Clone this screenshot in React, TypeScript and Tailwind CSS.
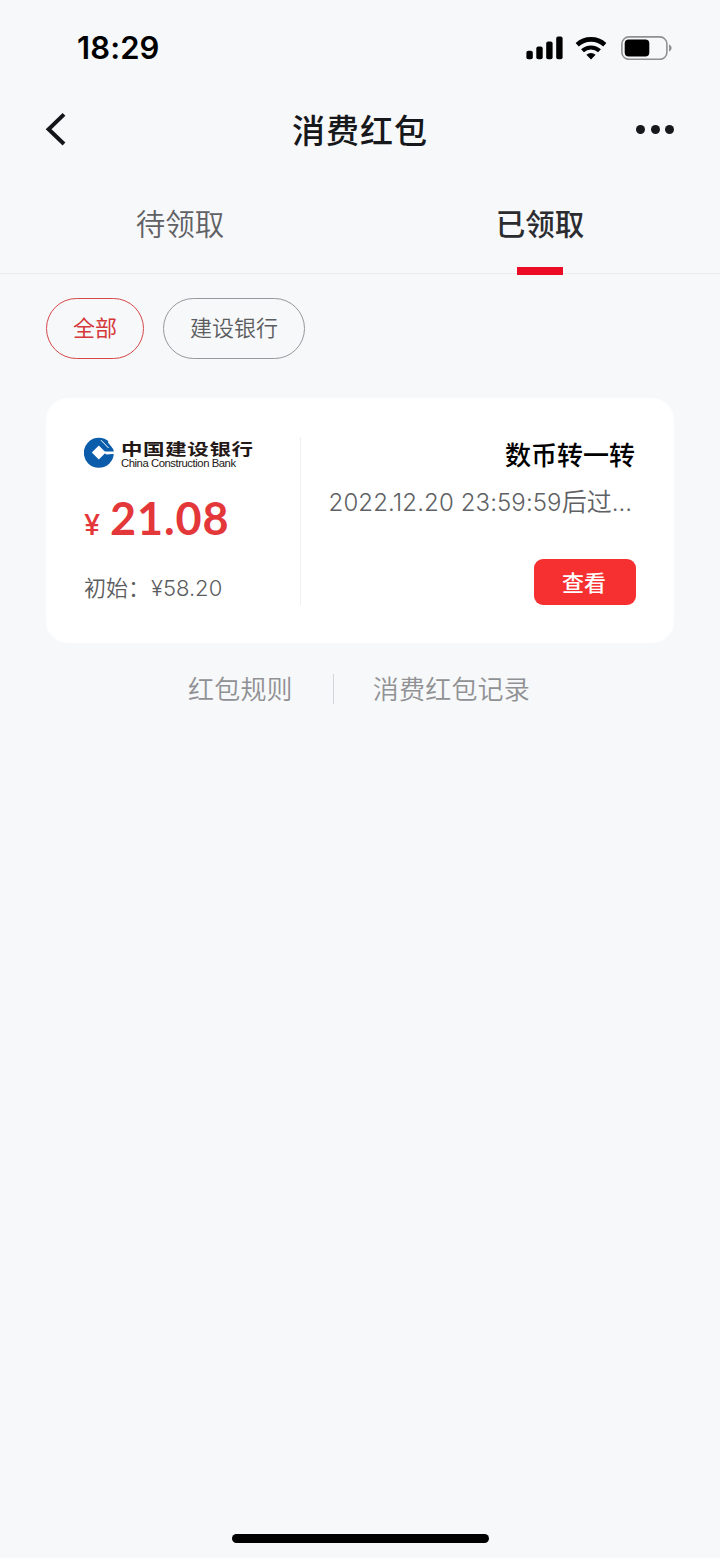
import { useState } from 'react';

const TABS = ['待领取', '已领取'];
const BANKS = ['全部', '建设银行'];

function StatusBar() {
  return (
    <div className="flex h-24 items-center justify-between pl-[77px] pr-[48px]">
      <span className="font-['Inter',sans-serif] text-[31px] leading-[40px] font-semibold tracking-[0.1px] text-black">18:29</span>
      <div className="flex items-center">
        <svg width="37" height="24" viewBox="0 0 37 24" fill="#000">
          <rect x="0.4" y="14.8" width="6.4" height="8.4" rx="2" />
          <rect x="10.3" y="10.4" width="6.4" height="12.8" rx="2" />
          <rect x="20.2" y="5.5" width="6.4" height="17.7" rx="2" />
          <rect x="30.2" y="0.5" width="6.4" height="22.7" rx="2" />
        </svg>
        <svg className="ml-3" width="32" height="24" viewBox="0 0 32 24" fill="none" stroke="#000" strokeWidth="4.6">
          <path d="M2.2 8.8a20.4 20.4 0 0 1 27.6 0" />
          <path d="M7.5 14.8a12.6 12.6 0 0 1 17 0" strokeWidth="4.2" />
          <path d="M16 23.4l-4.6-4.6a6.8 6.8 0 0 1 9.2 0z" fill="#000" stroke="none" />
        </svg>
        <svg className="ml-3.5" width="51" height="24" viewBox="0 0 51 24">
          <rect x="0.9" y="0.9" width="45" height="22.4" rx="7" fill="none" stroke="#8f9092" strokeWidth="1.6" />
          <rect x="3.7" y="3.6" width="24.6" height="17" rx="4" fill="#000" />
          <path d="M48 8.6c1.6.6 2.6 2 2.6 3.5s-1 2.9-2.6 3.5z" fill="#8f9092" />
        </svg>
      </div>
    </div>
  );
}

function BankLogo() {
  return (
    <div className="flex h-8 items-center">
      <svg width="31" height="32" viewBox="0 0 31 32">
        <circle cx="14.8" cy="15.8" r="15" fill="#0b5cab" />
        <path fill="#fff" d="M14.8 8.4l7 7-7 7-7-7z" />
        <path fill="#fff" d="M20.4 14.4H31v2.4l-8.6.8-2.6-2.2z" />
        <path d="M17 3.2l7.6 7.8" stroke="#fff" strokeWidth="1" />
        <path fill="#fff" d="M26 0h5v12.4h-1.4L24 5.6z" />
      </svg>
      <div className="ml-1.5 flex flex-col whitespace-nowrap text-[#231815]">
        <span className="text-[21.5px] leading-[20px] font-bold"><span className="inline-block origin-left scale-y-[0.76] tracking-[0.6px]">中国建设银行</span></span>
        <span className="font-['Liberation_Sans',sans-serif] text-[11.3px] leading-[10px] tracking-[-0.45px]">China Construction Bank</span>
      </div>
    </div>
  );
}

export default function RedPackets() {
  const [tab, setTab] = useState(1);
  const [bank, setBank] = useState(0);

  return (
    <div className="flex h-[1558px] w-[720px] flex-col bg-[#f7f8fa] font-['Noto_Sans_CJK_SC',sans-serif]">
      <StatusBar />

      <header className="flex h-[66px] items-center justify-between pl-[45px] pr-[46px]">
        <button type="button" className="w-[38px]">
          <svg width="22" height="34" viewBox="0 0 22 34" fill="none" stroke="#141519" strokeWidth="4">
            <path d="M19 2.4L3.6 17.2L19 32" />
          </svg>
        </button>
        <h1 className="pb-[1px] pl-[1px] text-[33px] leading-[48px] font-medium tracking-[1px] text-[#17181b]">消费红包</h1>
        <button type="button" className="flex w-[38px] justify-between">
          <span className="size-[9px] rounded-full bg-[#17181b]" />
          <span className="size-[9px] rounded-full bg-[#17181b]" />
          <span className="size-[9px] rounded-full bg-[#17181b]" />
        </button>
      </header>

      <nav className="flex h-[112px] border-b border-[#ebecee]">
        {TABS.map((t, i) => (
          <button key={t} type="button" onClick={() => setTab(i)} className="relative flex-1 pt-[8px]">
            <span className={i === tab ? 'text-[29.5px] leading-[44px] font-medium text-[#2b2c30]' : 'text-[29.5px] leading-[44px] font-[350] text-[#606164]'}>{t}</span>
            {i === tab && <span className="absolute -bottom-[2px] left-[157px] h-2 w-[46px] bg-[#ec0c26]" />}
          </button>
        ))}
      </nav>

      <div className="flex gap-[19px] px-[46px] pt-6">
        {BANKS.map((b, i) => (
          <button
            key={b}
            type="button"
            onClick={() => setBank(i)}
            className={`h-[61px] rounded-full border px-[26px] pb-[5px] text-[22px] leading-[32px] ${i === bank ? 'border-[#d5484a] text-[#d5383a]' : 'border-[#97989b] font-[350] text-[#5c5d60]'}`}
          >
            {b}
          </button>
        ))}
      </div>

      <section className="mx-[46px] mt-[39px] flex h-[245px] rounded-[22px] bg-white pt-[39px] pr-[38px] pl-[38px]">
        <div className="flex h-[168px] w-[217px] flex-col border-r border-[#f0f0f2]">
          <BankLogo />
          <div className="mt-[22px] flex items-baseline font-['Lato',sans-serif] leading-[54px] font-bold text-[#e4373a]">
            <span className="w-[18px] font-['Inter',sans-serif] text-[29px] font-medium">¥</span>
            <span className="ml-2 text-[45px] tracking-[0.9px]">21.08</span>
          </div>
          <div className="mt-[19px] flex h-8 items-center text-[22px] leading-[32px] text-[#5c5d60]">
            <span className="pb-[2px] font-[350]">初始：</span>
            <span className="ml-px pt-px font-['Inter',sans-serif] font-light">¥58.20</span>
          </div>
        </div>
        <div className="flex flex-1 flex-col items-end">
          <h2 className="mr-px -mt-px text-[26px] leading-[36px] font-medium text-black">数币转一转</h2>
          <p className="mt-[10px] mr-1 h-[36px] text-[25px] leading-[36px] whitespace-nowrap text-[#606164]">
            <span className="font-['Inter',sans-serif] text-[24px] font-[350] tracking-[0.1px]">2022.12.20 23:59:59</span><span className="font-[350]">后过</span><span className="font-['Inter',sans-serif] text-[24px] font-[350]">...</span>
          </p>
          <button type="button" className="mt-[41px] h-[46px] w-[102px] rounded-[9px] bg-[#f62f31] pr-[2px] pb-[3px] text-[22px] leading-[32px] font-medium text-white">查看</button>
        </div>
      </section>

      <div className="mt-[27px] flex h-[38px] items-center pl-[188px] text-[26px] leading-[38px] font-[350] text-[#909194]">
        <span className="pb-[2px] tracking-[0.2px]">红包规则</span>
        <span className="mr-[39px] ml-[40px] h-[30px] w-px bg-[#d4d5d8]" />
        <span className="pb-[2px] tracking-[0.2px]">消费红包记录</span>
      </div>

      <div className="mt-auto mb-[15px] h-[9px] w-[257px] self-center rounded-full bg-black" />
    </div>
  );
}
